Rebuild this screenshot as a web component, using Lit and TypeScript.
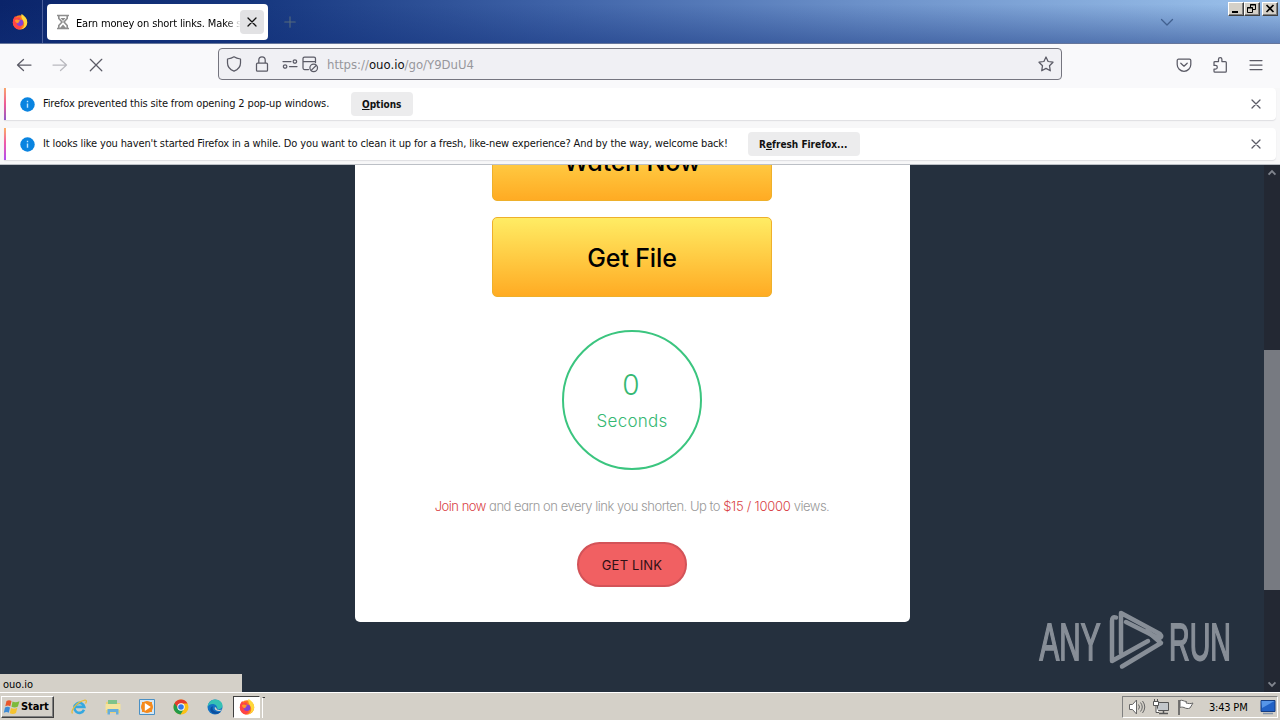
import { LitElement, html, css, svg } from "lit";
import { customElement, property } from "lit/decorators.js";

const stroke = (d: string) => svg`<path d=${d} fill="none" stroke="currentColor" stroke-width="1.25" stroke-linecap="round" stroke-linejoin="round"/>`;

const icons: Record<string, unknown> = {
  back: stroke("M15 8H1.5M7.5 2.500L1.500 8l6 5.500"),
  forward: stroke("M1 8h13.5M8.500 2.500l6 5.500-6 5.500"),
  stop: stroke("M2.300 2.300l11.500 11.500M13.800 2.300L2.300 13.800"),
  close: stroke("M4 4l8 8M12 4l-8 8"),
  plus: stroke("M8 2v12M2 8h12"),
  chevron: stroke("M2.5 5.5L8 11l5.500-5.500"),
  scroll: svg`<path d="M2.500 5.500L8 11l5.500-5.500" fill="none" stroke="currentColor" stroke-width="3"/>`,
  shield: stroke("M8 .8C6 2.200 3.800 2.700 1.500 3v4c0 4 2.500 6.600 6.500 8.200C12 13.600 14.500 11 14.500 7V3C12.200 2.700 10 2.200 8 .8z"),
  lock: stroke("M3.500 7.200h9a1 1 0 0 1 1 1v6a1 1 0 0 1-1 1h-9a1 1 0 0 1-1-1v-6a1 1 0 0 1 1-1zM4.800 7V4a3.200 3.200 0 0 1 6.400 0v3"),
  permissions: stroke("M1 5.500h8M7.500 10.500H15M14.600 5.500a1.700 1.700 0 1 1-3.400 0a1.700 1.700 0 1 1 3.400 0M4.800 10.500a1.700 1.700 0 1 1-3.400 0a1.700 1.700 0 1 1 3.400 0"),
  popup: stroke("M6.500 13.500H2.500a1.500 1.500 0 0 1-1.500-1.500V2.500a1.500 1.500 0 0 1 1.500-1.500h9.500A1.500 1.500 0 0 1 13.500 2.500v4M1 5.500h12.500M15.500 11.800a3.800 3.800 0 1 1-7.600 0a3.800 3.800 0 1 1 7.600 0M9.200 14.400l5.200-5.200"),
  star: stroke("M8 1l2.100 4.500 4.900.7-3.500 3.500.8 5.100L8 12.400l-4.300 2.400.8-5.100L1 6.200l4.900-.7z"),
  pocket: stroke("M2.500 2.200h11a1.300 1.300 0 0 1 1.300 1.300V7.500a6.800 6.800 0 0 1-13.600 0V3.500a1.300 1.300 0 0 1 1.300-1.300zM4.800 6.200L8 9.200l3.200-3"),
  extension: stroke("M2 5.500a1 1 0 0 1 1-1h3.500V2.300a1.700 1.700 0 0 1 3.400 0v2.200h3.400a1 1 0 0 1 1 1v8.700a1 1 0 0 1-1 1H3a1 1 0 0 1-1-1V12h1.500a1.800 1.800 0 0 0 0-3.600H2z"),
  menu: stroke("M2 3.500h12M2 8h12M2 12.500h12"),
  hourglass: svg`<g fill="none" stroke="#8d8d8d" stroke-width="1.600"><path d="M2 1.500h12M2 14.500h12M3.800 2v2.500L7 8l-3.200 3.500V14M12.200 2v2.500L9 8l3.200 3.500V14"/></g><path d="M5 14l3-3.500 3 3.500zM5.500 4h5L8 7z" fill="#8d8d8d"/>`,
  info: svg`<circle cx="8" cy="8" r="7.700" fill="#0a84e0"/><path d="M8 7v4.500M8 4v1.500" stroke="#bfe4ff" stroke-width="1.500"/>`,
  firefox: svg`<circle cx="8" cy="8.500" r="7.200" fill="#ff7b1f"/><path d="M1 6.500C1.300 4.500 2.200 3 3.500 2l.6 2C6 3 7.500 3.200 8.500 4L5 8l5 5-3 2.500C3 15.200.2 11.500 1 6.500z" fill="#ff4545"/><path d="M9.500 0c3.500 2 6 5 5.700 8.800-.3 3.400-2.700 5.900-5.700 6.500 3-2.500 3.300-5 2.200-7.500C10.800 5.600 8.600 3.500 9.500 0z" fill="#ffd83a"/><circle cx="8" cy="8.700" r="3.300" fill="#8441d6"/><path d="M3 6c2-1.200 4-.2 5.500 1C7 7.200 6.300 8 6.500 9.200c-2 .2-3.600-1.200-3.500-3.200z" fill="#ff9a26"/>`,
  ie: svg`<path d="M13 10.800A5 5 0 1 1 13.300 7.900H4" fill="none" stroke="#35a8e0" stroke-width="2.600"/><path d="M1.500 14.500C-.5 12 5 3 14 1.200c2-.3 1.500 2 .5 3.300" fill="none" stroke="#e6bd3e" stroke-width="1.300"/>`,
  explorer: svg`<path d="M1 3l5-1 1 2h8v10H1z" fill="#ecd27b"/><path d="M3 1h9v6H3z" fill="#7fc38a"/><path d="M.5 5h15v6H.5z" fill="#f5e49d"/><path d="M2.500 15.500V10h11v5.500h-2.500V13h-6v2.500z" fill="#66aedb"/>`,
  media: svg`<path d="M.5.500h15v15H.5z" fill="#d5e7f4" stroke="#4a90c4"/><path d="M3 3h10v10H3z" fill="#f58a1c"/><circle cx="8" cy="8" r="6" fill="#f58a1c"/><path d="M5.800 4l6 4-6 4z" fill="#fff"/>`,
  chrome: svg`<circle cx="8" cy="8" r="7.500" fill="#fbc116"/><path d="M8 8L1.500 4.250A7.500 7.500 0 0 0 7.500 15.500L11 9.700z" fill="#229a49"/><path d="M1.500 4.250A7.500 7.500 0 0 1 14.500 4.500H8L5 9z" fill="#e33b2e"/><circle cx="8" cy="8" r="3.700" fill="#fff"/><circle cx="8" cy="8" r="2.800" fill="#3279e8"/>`,
  edge: svg`<circle cx="8" cy="8" r="7.500" fill="#1473c4"/><path d="M.6 8C1 3.500 4.200.5 8.200.5c4.300 0 7.300 3 7.300 6 0 2.500-2 4-4.500 3.800C10 10 10.500 8.500 9.500 7 7.500 4 2 4.500.6 8z" fill="#35c1b5"/><path d="M6 7.500c-1.500 3 1 6 7.500 5.500-4 4-11.500 1-10-3.500C4 8 5 7.400 6 7.500z" fill="#0b4e9e"/><path d="M8 8c-1 1.800.5 4 5 4l3-1.500C12.500 11.500 9 11 9.500 9z" fill="#d4d0c8"/>`,
  windows: svg`<path d="M2.500 2C4.500.700 6 1 7.500 2L6.300 7.300C4.800 6.300 3 6.300 1.300 7.300z" fill="#e8562a"/><path d="M8.500 2.500c2 1 4 1 7-.3L13.900 7.500c-2.200 1.200-4.200 1.200-6.400.2z" fill="#7dba3c"/><path d="M1 8.500c1.800-1 3.500-1 5 0L4.800 13.800c-1.500-1-3-1-5 0z" fill="#3d8bd6"/><path d="M7 9c2 1 4 1 6.300-.2L12 14.100c-2.200 1.200-4 1.200-6.200.1z" fill="#f5c32f"/>`,
  volume: svg`<g fill="#fff" stroke="#666"><path d="M.5 5.500h3L7.500 1v14l-4-4.500h-3z"/><path d="M9.500 5.500q2 2.500 0 5M11.500 3.500q3.500 4.500 0 9M13.500 2q4.500 6 0 12" fill="none"/></g>`,
  network: svg`<g fill="#fff" stroke="#555"><path d="M4.500 3.500h11v8h-11z" fill="#c3c7cb"/><path d="M6 14.500h9M10.500 11.500v3" stroke-width="1.500"/><path d="M.5 2.500h5v4h-5zM1.500 0v2.500M4.500 0v2.500M3 6.500v7h3"/></g>`,
  flag: svg`<path d="M2 1v15" stroke="#555" stroke-width="1.500"/><path d="M3 1.500c2-1 4 1 6.500 1L9 4c2 .5 4.500 1 7 0l-3 5c-2 1-4 .5-6-.5-1.500-.5-3-.5-4 0z" fill="#fff" stroke="#666"/>`,
  desktop: svg`<path d="M1 1.500h14v11H1z" fill="#2262c6" stroke="#163d80"/><path d="M1.500 2h13L2 9z" fill="#5796e8"/><path d="M3 14.500h10" stroke="#8193aa" stroke-width="1.500"/>`,
};

@customElement("ui-icon")
export class UiIcon extends LitElement {
  static styles = css`
    :host {
      display: block;
      flex: none;
      width: 16px;
      height: 16px;
    }
    svg {
      display: block;
      width: 100%;
      height: 100%;
      overflow: visible;
    }
  `;

  @property() name = "";

  render() {
    return html`<svg viewBox="0 0 16 16">${icons[this.name]}</svg>`;
  }
}

@customElement("browser-chrome")
export class BrowserChrome extends LitElement {
  static styles = css`
    :host {
      display: block;
      height: 164px;
      background: #f7f7f8;
      color: #111;
      font: 11px/16px "DejaVu Sans Condensed", "DejaVu Sans", sans-serif;
      font-stretch: condensed;
    }
    .titlebar {
      position: relative;
      display: flex;
      align-items: flex-start;
      height: 44px;
      box-sizing: border-box;
      border-bottom: 1px solid #66769b;
      background: linear-gradient(180deg, rgba(18, 48, 122, 0) 10%, rgba(18, 48, 122, 0.45)),
        linear-gradient(90deg, #0a246a 0, #16377f 20%, #3e62a7 43%, #6d92ca 68%, #90b6e3 92%, #9cc2ec 100%);
    }
    .view {
      width: 43px;
      height: 43px;
      box-sizing: border-box;
      padding: 14px 12px;
      border-right: 1px solid #4a5f9c;
    }
    .tab {
      display: flex;
      align-items: center;
      width: 221px;
      height: 36px;
      box-sizing: border-box;
      margin: 4px 0 0 4px;
      padding: 0 4px 0 8px;
      border-radius: 4px;
      background: #fff;
    }
    .tab .label {
      flex: 1;
      margin-left: 5px;
      padding-top: 3px;
      overflow: hidden;
      white-space: nowrap;
      color: #000;
      letter-spacing: -0.14px;
      mask-image: linear-gradient(90deg, #000 150px, transparent 165px);
    }
    .tab .close {
      padding: 4px;
      border-radius: 4px;
      background: #e2e2e4;
    }
    .plus {
      width: 14px;
      height: 14px;
      margin: 15px 0 0 15px;
      color: #566a7c;
    }
    .chevron {
      margin: 14px 105px 0 auto;
      color: #41608f;
    }
    .controls {
      position: absolute;
      top: 2px;
      right: 2px;
      display: flex;
    }
    .control {
      width: 16px;
      height: 14px;
      box-sizing: border-box;
      border: 1px solid;
      border-color: #fff #404040 #404040 #fff;
      background: #d4d0c8;
      box-shadow: inset -1px -1px #808080;
    }
    .control:last-child {
      margin-left: 2px;
    }
    .control svg {
      display: block;
      width: 14px;
      height: 12px;
    }
    .toolbar {
      display: flex;
      align-items: center;
      height: 44px;
      box-sizing: border-box;
      padding: 0 16px 4px;
      background: #f9f9fb;
      color: #5b5b66;
    }
    .toolbar > ui-icon {
      margin: 1px 20px 0 0;
    }
    .toolbar .dim {
      opacity: 0.4;
    }
    .url {
      display: flex;
      align-items: center;
      width: 844px;
      height: 32px;
      box-sizing: border-box;
      margin: 0 114px 0 94px;
      padding: 0 7px;
      border: 1px solid #75757f;
      border-radius: 4px;
      background: #f0f0f4;
    }
    .url .lock {
      margin: 0 12px;
    }
    .url .popup {
      margin: 0 9px 0 4px;
    }
    .url .address {
      flex: 1;
      padding-top: 2px;
      font: 13px/18px "DejaVu Sans Condensed", "DejaVu Sans", sans-serif;
      font-stretch: condensed;
      color: #97979c;
    }
    .url b {
      font-weight: 400;
      color: #111;
    }
    .toolbar > .last {
      margin-right: 0;
    }
    .notice {
      display: flex;
      align-items: center;
      height: 32px;
      box-sizing: border-box;
      margin: 0 4px 8px;
      padding-right: 12px;
      border-radius: 0 4px 4px 0;
      background: #fff;
      box-shadow: 0 1px 1px #dedee2;
      white-space: nowrap;
    }
    .notice:last-child {
      margin-bottom: 0;
    }
    .bar {
      width: 2px;
      height: 32px;
      margin-right: 14px;
      background: linear-gradient(#f9a66c, #ee5b96 50%, #9059c8);
    }
    .second .bar {
      background: linear-gradient(#fbb063, #f05ba6 45%, #b04cf0);
    }
    .notice .info {
      width: 15px;
      height: 15px;
      margin-right: 8px;
    }
    .message {
      letter-spacing: -0.14px;
    }
    .first .message {
      width: 308px;
    }
    .second .message {
      width: 705px;
    }
    .button {
      height: 24px;
      box-sizing: border-box;
      padding: 5px 11px 3px;
      border-radius: 4px;
      background: #ececed;
      font-size: 10px;
      font-weight: 700;
    }
    .first .button {
      width: 62px;
    }
    .second .button {
      width: 112px;
    }
    .notice .dismiss {
      margin-left: auto;
      color: #5b5b66;
    }
    u {
      text-underline-offset: 1px;
    }
  `;

  render() {
    return html`
      <div class="titlebar">
        <div class="view"><ui-icon name="firefox"></ui-icon></div>
        <div class="tab">
          <ui-icon name="hourglass"></ui-icon>
          <span class="label">Earn money on short links. Make s</span>
          <div class="close"><ui-icon name="close"></ui-icon></div>
        </div>
        <ui-icon class="plus" name="plus"></ui-icon>
        <ui-icon class="chevron" name="chevron"></ui-icon>
        <div class="controls">
          <div class="control"><svg><path d="M3 9h6" stroke="#000" stroke-width="2" /></svg></div>
          <div class="control">
            <svg fill="none" stroke="#000"><path d="M5.500 4V1.500h5v5H8M5 2h6M2.500 4.500h5v5h-5zM2 5h6" /></svg>
          </div>
          <div class="control"><svg><path d="M3.500 2l7 7M10.500 2l-7 7" stroke="#000" stroke-width="1.700" /></svg></div>
        </div>
      </div>
      <div class="toolbar">
        <ui-icon name="back"></ui-icon>
        <ui-icon class="dim" name="forward"></ui-icon>
        <ui-icon name="stop"></ui-icon>
        <div class="url">
          <ui-icon name="shield"></ui-icon>
          <ui-icon class="lock" name="lock"></ui-icon>
          <ui-icon name="permissions"></ui-icon>
          <ui-icon class="popup" name="popup"></ui-icon>
          <span class="address">https://<b>ouo.io</b>/go/Y9DuU4</span>
          <ui-icon name="star"></ui-icon>
        </div>
        <ui-icon name="pocket"></ui-icon>
        <ui-icon name="extension"></ui-icon>
        <ui-icon class="last" name="menu"></ui-icon>
      </div>
      <div class="notice first">
        <div class="bar"></div>
        <ui-icon class="info" name="info"></ui-icon>
        <span class="message">Firefox prevented this site from opening 2 pop-up windows.</span>
        <div class="button"><u>O</u>ptions</div>
        <ui-icon class="dismiss" name="close"></ui-icon>
      </div>
      <div class="notice second">
        <div class="bar"></div>
        <ui-icon class="info" name="info"></ui-icon>
        <span class="message">It looks like you haven't started Firefox in a while. Do you want to clean it up for a fresh, like-new experience? And by the way, welcome back!</span>
        <div class="button">R<u>e</u>fresh Firefox...</div>
        <ui-icon class="dismiss" name="close"></ui-icon>
      </div>
    `;
  }
}

@customElement("link-page")
export class LinkPage extends LitElement {
  static styles = css`
    :host {
      position: relative;
      display: flex;
      height: 528px;
      box-sizing: border-box;
      overflow: hidden;
      border-top: 1px solid #bcc0c6;
      background: #25303e;
      font-family: Inter, "Liberation Sans", sans-serif;
      font-feature-settings: "cv11";
    }
    .content {
      flex: 1;
      display: flex;
      justify-content: center;
      align-items: flex-start;
    }
    .card {
      display: flex;
      flex-direction: column;
      align-items: center;
      width: 555px;
      height: 457px;
      box-sizing: border-box;
      margin-left: 1px;
      padding-right: 1px;
      border-radius: 0 0 5px 5px;
      background: #fff;
    }
    .offer {
      flex: none;
      width: 280px;
      height: 80px;
      box-sizing: border-box;
      margin-bottom: 16px;
      border: 1px solid #eeb02b;
      border-radius: 5px;
      background: linear-gradient(#ffec64, #ffab23);
      color: #000;
      font-size: 25px;
      font-weight: 500;
      line-height: 81px;
      text-align: center;
      letter-spacing: -0.15px;
    }
    .offer:first-child {
      margin-top: -44px;
    }
    .timer {
      flex: none;
      display: flex;
      flex-direction: column;
      align-items: center;
      width: 140px;
      height: 140px;
      box-sizing: border-box;
      margin-top: 17px;
      padding-top: 34px;
      border: 2px solid #3bc57f;
      border-radius: 50%;
      color: #35b873;
    }
    .count {
      margin-right: 2px;
      font-size: 28px;
      font-weight: 300;
      line-height: 38px;
    }
    .unit {
      font-size: 17px;
      font-weight: 300;
      line-height: 34px;
      letter-spacing: 0.25px;
    }
    .promo {
      margin: 25px 0 0;
      color: #999;
      font-size: 13px;
      font-weight: 300;
      line-height: 22px;
      letter-spacing: -0.49px;
      white-space: nowrap;
    }
    .promo span {
      color: #d93f46;
    }
    .promo .rate {
      letter-spacing: -0.25px;
    }
    .get {
      width: 110px;
      height: 45px;
      box-sizing: border-box;
      margin-top: 25px;
      border: 2px solid #d35358;
      border-radius: 23px;
      background: #f16062;
      color: #301015;
      font-size: 13px;
      line-height: 42px;
      letter-spacing: 0.2px;
      text-align: center;
    }
    .scrollbar {
      display: flex;
      flex-direction: column;
      justify-content: space-between;
      width: 16px;
      background: #232833;
      color: #80858e;
    }
    .scrollbar ui-icon {
      width: 10px;
      height: 10px;
      margin: 3px;
    }
    .scrollbar .up {
      transform: rotate(180deg);
    }
    .thumb {
      height: 240px;
      margin-top: 83px;
      background: #777a81;
    }
    .status {
      position: absolute;
      left: 0;
      bottom: 0;
      width: 242px;
      height: 18px;
      box-sizing: border-box;
      padding-left: 3px;
      background: #d4d0c8;
      color: #000;
      font: 11px/21px "DejaVu Sans Condensed", "DejaVu Sans", sans-serif;
      font-stretch: condensed;
    }
    .watermark {
      position: absolute;
      left: 1038px;
      top: 444px;
      width: 194px;
      height: 64px;
      overflow: visible;
      opacity: 0.55;
      fill: #d8dbe0;
      font-family: "Liberation Sans", sans-serif;
      font-size: 52px;
    }
    .watermark text {
      stroke: #d8dbe0;
      stroke-width: 1.8px;
    }
  `;

  render() {
    return html`
      <div class="content">
        <div class="card">
          <div class="offer">Watch Now</div>
          <div class="offer">Get File</div>
          <div class="timer">
            <span class="count">0</span>
            <span class="unit">Seconds</span>
          </div>
          <p class="promo"><span>Join now</span> and earn on every link you shorten. Up to <span class="rate">$15 / 10000</span> views.</p>
          <div class="get">GET LINK</div>
        </div>
      </div>
      <div class="scrollbar">
        <ui-icon class="up" name="scroll"></ui-icon>
        <div class="thumb"></div>
        <ui-icon name="scroll"></ui-icon>
      </div>
      <svg class="watermark" viewBox="0 0 194 64">
        <text transform="translate(1.500 50.500) scale(.57 1)">ANY</text>
        <text transform="translate(131 50.500) scale(.55 1)">RUN</text>
        <g fill="none" stroke="#d8dbe0" stroke-width="4.500" stroke-linejoin="round" stroke-linecap="round">
          <path d="M78 8.500Q74 7 74 12V52L110 32" />
          <path d="M83 44V4L122 25Q125 28 121 29.500L88 13" />
          <path d="M109 22L123 34L84 57.500" />
        </g>
      </svg>
      <div class="status">ouo.io</div>
    `;
  }
}

@customElement("task-bar")
export class TaskBar extends LitElement {
  static styles = css`
    :host {
      display: flex;
      align-items: center;
      height: 28px;
      box-sizing: border-box;
      padding: 1px 2px 0 1px;
      border-top: 1px solid #fff;
      background: #d4d0c8;
      color: #000;
      font: 11px/16px "DejaVu Sans Condensed", "DejaVu Sans", sans-serif;
      font-stretch: condensed;
    }
    .start {
      display: flex;
      align-items: center;
      gap: 1px;
      width: 53px;
      height: 22px;
      box-sizing: border-box;
      padding-left: 2px;
      border: 1px solid;
      border-color: #fff #404040 #404040 #fff;
      box-shadow: inset -1px -1px #808080;
      font-weight: 700;
      letter-spacing: -0.1px;
    }
    .apps {
      display: flex;
      gap: 18px;
      margin-left: 17px;
    }
    .active {
      width: 27px;
      height: 22px;
      box-sizing: border-box;
      margin-left: 10px;
      padding: 2px 5px;
      border: 1px solid;
      border-color: #404040 #fff #fff #404040;
      background: #fff;
    }
    .grip {
      width: 2px;
      height: 20px;
      margin-left: 2px;
      border-left: 1px solid #fff;
      border-top: 1px solid #404040;
    }
    .tray {
      display: flex;
      align-items: center;
      height: 22px;
      box-sizing: border-box;
      margin-left: auto;
      padding: 0 1px 0 6px;
      border: 1px solid;
      border-color: #808080 #fff #fff #808080;
    }
    .tray ui-icon {
      margin-right: 8px;
    }
    .time {
      width: 40px;
      margin: 1px 10px 0 8px;
      padding-right: 1px;
      letter-spacing: -0.2px;
      white-space: nowrap;
    }
    .tray .desktop {
      margin-right: 0;
    }
  `;

  render() {
    return html`
      <div class="start"><ui-icon name="windows"></ui-icon>Start</div>
      <div class="apps">
        ${["ie", "explorer", "media", "chrome", "edge"].map((name) => html`<ui-icon name=${name}></ui-icon>`)}
      </div>
      <div class="active"><ui-icon name="firefox"></ui-icon></div>
      <div class="grip"></div>
      <div class="tray">
        <ui-icon name="volume"></ui-icon>
        <ui-icon name="network"></ui-icon>
        <ui-icon name="flag"></ui-icon>
        <span class="time">3:43 PM</span>
        <ui-icon class="desktop" name="desktop"></ui-icon>
      </div>
    `;
  }
}

@customElement("app-root")
export class AppRoot extends LitElement {
  static styles = css`
    :host {
      display: flex;
      flex-direction: column;
      width: 1280px;
      height: 720px;
      overflow: hidden;
    }
    browser-chrome,
    link-page,
    task-bar {
      flex: none;
    }
  `;

  render() {
    return html`
      <browser-chrome></browser-chrome>
      <link-page></link-page>
      <task-bar></task-bar>
    `;
  }
}
